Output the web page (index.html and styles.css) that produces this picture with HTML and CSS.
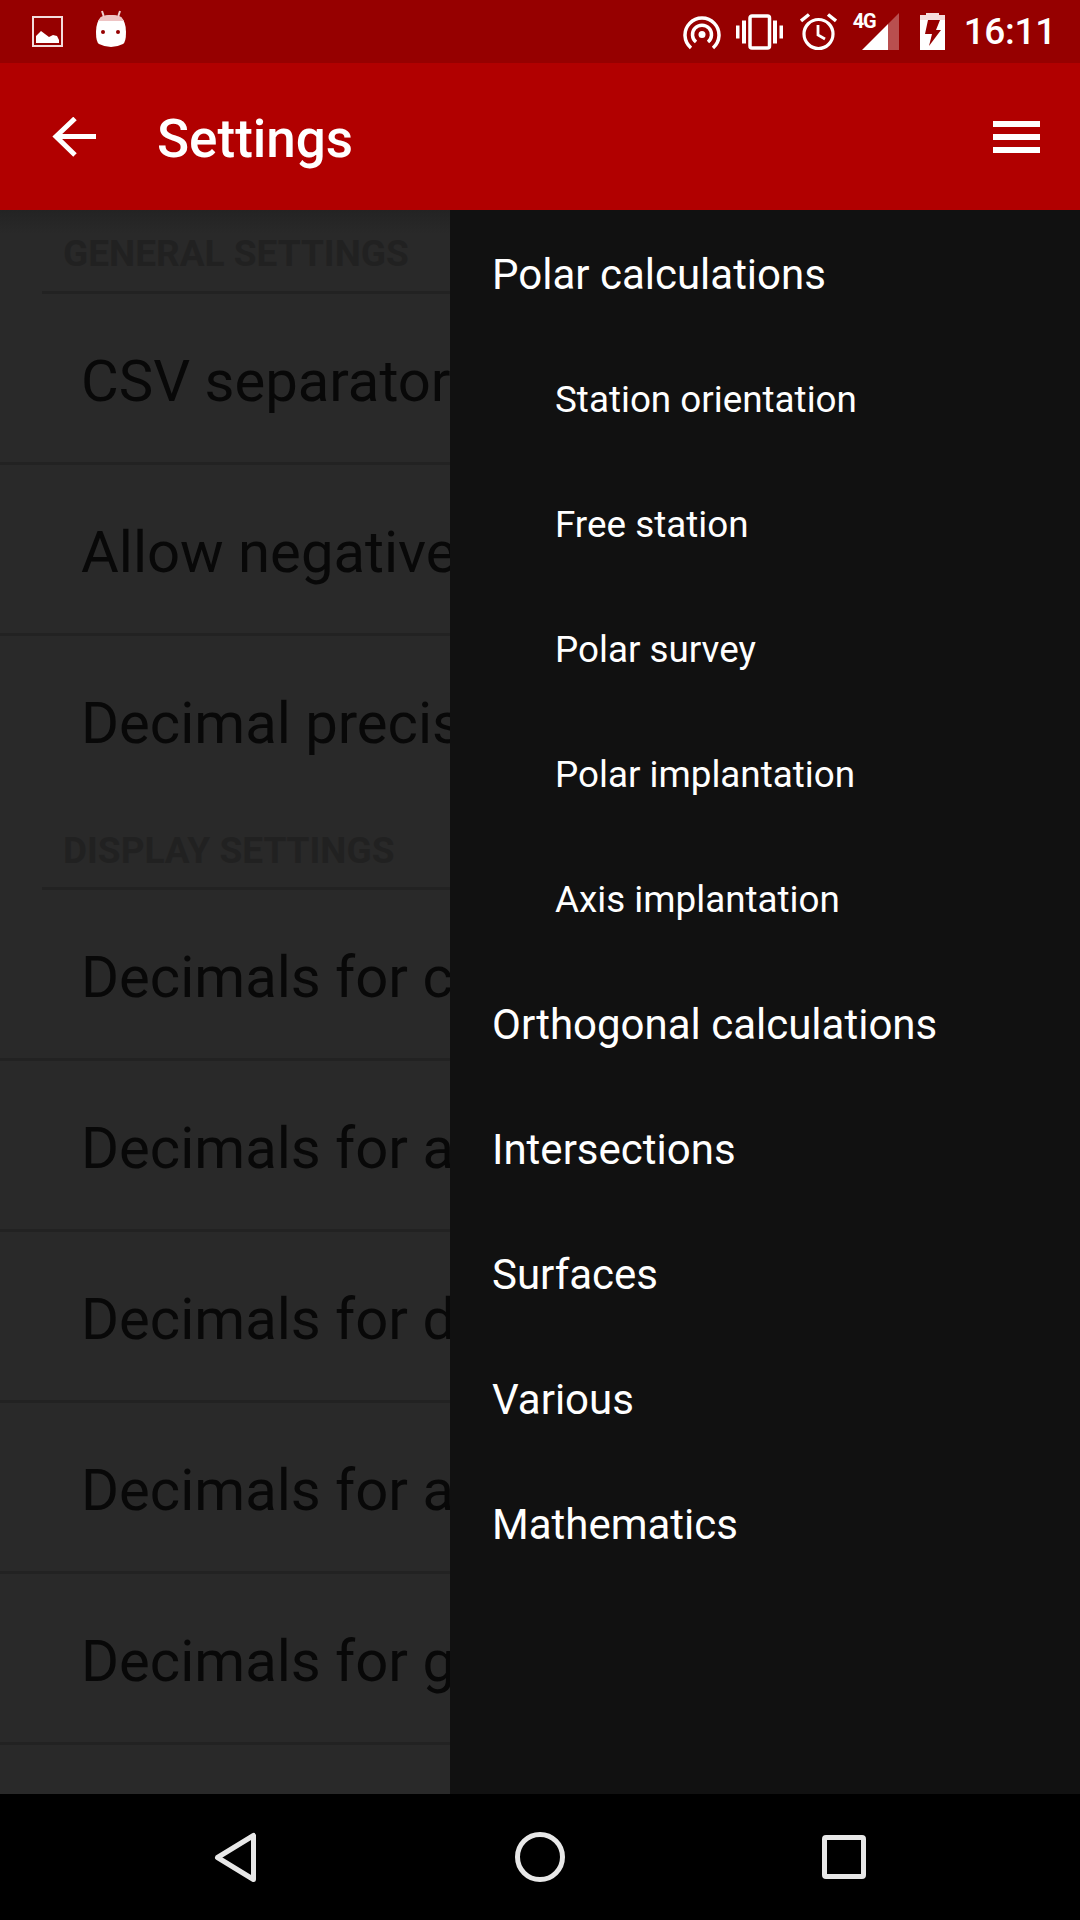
FILE: index.html
```html
<!DOCTYPE html>
<html lang="en">
<head>
<meta charset="UTF-8">
<meta name="viewport" content="width=device-width, initial-scale=1.0">
<title>Settings</title>
<link rel="stylesheet" href="styles.css">
</head>
<body>
<div class="phone">
  <div class="status-bar">
    <div class="status-left">
      <svg width="32" height="32" viewBox="0 0 32 32">
        <rect x="1" y="1" width="29" height="29" fill="none" stroke="#f3dcdc" stroke-width="2"/>
        <path d="M4 27V20L9 15L13 18L17 21L21 19L25 20L27 24V27Z" fill="#fff"/>
      </svg>
      <svg class="ic-android" width="32" height="38" viewBox="0 0 32 38">
        <path d="M7 1L9 7M25 1L23 7" stroke="#f0cfcf" stroke-width="2" fill="none"/>
        <path d="M6 7Q16 3 26 7Q31 12 31 22Q31 32 28 34Q22 37 16 37Q10 37 4 34Q1 32 1 22Q1 12 6 7Z" fill="#fff"/>
        <path d="M6 7Q16 3 26 7L29 11H3Z" fill="#eec4c4"/>
        <circle cx="8" cy="22" r="2" fill="#960000"/>
        <circle cx="23" cy="22" r="2" fill="#960000"/>
      </svg>
    </div>
    <div class="status-right">
      <svg width="38" height="36" viewBox="0 0 38 36">
        <path d="M8 34A17 17 0 1 1 30 34" fill="none" stroke="#fff" stroke-width="3.500"/>
        <path d="M13 28A9.500 9.500 0 1 1 25 28" fill="none" stroke="#fff" stroke-width="3.500"/>
        <circle cx="19" cy="20.500" r="3.500" fill="#fff"/>
      </svg>
      <svg class="ic-vibrate" width="47" height="36" viewBox="0 0 47 36">
        <rect x="14" y="2" width="19.500" height="32" rx="2" fill="none" stroke="#fff" stroke-width="3.500"/>
        <path d="M0 11.500h3.500v13H0zM6 6.500h4v23H6zM37 6.500h4v23h-4zM43.500 11.500H47v13h-3.500z" fill="#fff"/>
      </svg>
      <svg class="ic-alarm" width="37" height="38" viewBox="0 0 37 38">
        <circle cx="18.500" cy="21" r="14.500" fill="none" stroke="#fff" stroke-width="3.200"/>
        <path d="M18 12V22L25 26" fill="none" stroke="#fff" stroke-width="2.800"/>
        <path d="M1 8L9 1.500M36 8L28 1.500" fill="none" stroke="#fff" stroke-width="3.500"/>
      </svg>
      <div class="signal">
        <span class="signal-type">4G</span>
        <svg width="37" height="37" viewBox="0 0 37 37">
          <path d="M37 0V37H26V11Z" fill="#b94f4f"/>
          <path d="M26 11V37H0Z" fill="#fff"/>
        </svg>
      </div>
      <svg class="ic-battery" width="25" height="37" viewBox="0 0 25 37">
        <path d="M6 0H19V2H25V37H0V2H6Z" fill="#fff"/>
        <path d="M6 0H19V2H25V7H0V2H6Z" fill="#f4dcdc"/>
        <path d="M8 7H20L16 17H21L9 33L12 21H5Z" fill="#960000"/>
      </svg>
      <span class="clock">16:11</span>
    </div>
  </div>

  <div class="app-bar">
    <svg width="44" height="40" viewBox="0 0 44 40">
      <path d="M44 19.500H4M23 1.500L4 19.500L23 38" fill="none" stroke="#fff" stroke-width="5"/>
    </svg>
    <h1 class="title">Settings</h1>
    <svg width="47" height="32" viewBox="0 0 47 32">
      <path d="M0 0h47v6H0zM0 13h47v6H0zM0 26h47v6H0z" fill="#fff"/>
    </svg>
  </div>

  <div class="content">
    <div class="settings">
      <div class="section-title first">GENERAL SETTINGS</div>
      <div class="row">CSV separator</div>
      <div class="row">Allow negative coordinates</div>
      <div class="row last">Decimal precision</div>
      <div class="section-title">DISPLAY SETTINGS</div>
      <div class="row">Decimals for coordinates</div>
      <div class="row">Decimals for angles</div>
      <div class="row">Decimals for distances</div>
      <div class="row">Decimals for averages</div>
      <div class="row">Decimals for gisements</div>
    </div>

    <div class="drawer">
      <div class="drawer-item">Polar calculations</div>
      <div class="drawer-item sub">Station orientation</div>
      <div class="drawer-item sub">Free station</div>
      <div class="drawer-item sub">Polar survey</div>
      <div class="drawer-item sub">Polar implantation</div>
      <div class="drawer-item sub">Axis implantation</div>
      <div class="drawer-item">Orthogonal calculations</div>
      <div class="drawer-item">Intersections</div>
      <div class="drawer-item">Surfaces</div>
      <div class="drawer-item">Various</div>
      <div class="drawer-item">Mathematics</div>
    </div>
  </div>

  <div class="nav-bar">
    <svg width="44" height="52" viewBox="0 0 44 52">
      <path d="M39.500 4.500V48.500L3.500 26.500Z" fill="none" stroke="#e8e8e8" stroke-width="5" stroke-linejoin="round"/>
    </svg>
    <svg width="50" height="50" viewBox="0 0 50 50">
      <circle cx="25" cy="25" r="22.500" fill="none" stroke="#e8e8e8" stroke-width="5"/>
    </svg>
    <svg width="44" height="44" viewBox="0 0 44 44">
      <rect x="2.500" y="2.500" width="39" height="39" rx="1.500" fill="none" stroke="#e8e8e8" stroke-width="5"/>
    </svg>
  </div>
</div>
</body>
</html>
```

FILE: styles.css
```css
body {
  margin: 0;
  padding: 0;
  background-color: #000;
  font-family: Roboto, "Liberation Sans", sans-serif;
}
.phone {
  display: flex;
  flex-direction: column;
  width: 1080px;
  height: 1920px;
  overflow: hidden;
}

/* status bar */
.status-bar {
  display: flex;
  justify-content: space-between;
  align-items: center;
  flex: none;
  height: 63px;
  padding: 0 24px 0 32px;
  box-sizing: border-box;
  background-color: #960000;
}
.status-left {
  display: flex;
  align-items: center;
  gap: 31px;
}
.ic-android {
  margin-top: -6px;
}
.status-right {
  display: flex;
  align-items: center;
}
.ic-vibrate {
  margin-left: 15px;
}
.ic-alarm {
  margin-left: 17px;
}
.signal {
  position: relative;
  display: flex;
  margin-left: 25px;
}
.signal-type {
  position: absolute;
  left: -9px;
  top: -2px;
  color: #fff;
  font-size: 20px;
  font-weight: 700;
  letter-spacing: -1px;
  line-height: 20px;
}
.ic-battery {
  margin-left: 21px;
}
.clock {
  margin-left: 19px;
  color: #fff;
  font-size: 37px;
  font-weight: 500;
  letter-spacing: -0.3px;
}

/* app bar */
.app-bar {
  display: flex;
  align-items: center;
  flex: none;
  height: 147px;
  padding: 0 40px 0 52px;
  box-sizing: border-box;
  background-color: #b10000;
}
.title {
  flex: 1;
  margin: 4px 0 0 61px;
  color: #fff;
  font-size: 53px;
  font-weight: 500;
}

/* settings list behind the drawer */
.content {
  position: relative;
  flex: 1;
  overflow: hidden;
  background-color: #292929;
}
.content::before {
  content: "";
  position: absolute;
  top: 0;
  left: 0;
  right: 0;
  height: 24px;
  background: linear-gradient(#232323, #292929);
}
.settings {
  position: relative;
  white-space: nowrap;
}
.section-title {
  display: flex;
  align-items: flex-end;
  height: 86px;
  margin-left: 42px;
  padding-left: 21px;
  padding-bottom: 14px;
  box-sizing: border-box;
  border-bottom: 3px solid #222;
  color: #212121;
  font-size: 37px;
  line-height: 44px;
  font-weight: 700;
}
.section-title.first {
  height: 84px;
  padding-bottom: 15px;
}
.row {
  display: flex;
  align-items: center;
  height: 171px;
  padding-left: 81px;
  padding-top: 6px;
  box-sizing: border-box;
  border-bottom: 3px solid #222;
  color: #080808;
  font-size: 58px;
}
.row.last {
  height: 168px;
  border-bottom: none;
}

/* drawer */
.drawer {
  position: absolute;
  top: 0;
  right: 0;
  bottom: 0;
  width: 630px;
  padding-top: 2px;
  box-sizing: border-box;
  background-color: #111;
}
.drawer-item {
  display: flex;
  align-items: center;
  height: 125px;
  padding-left: 42px;
  color: #fff;
  font-size: 42px;
}
.drawer-item.sub {
  padding-left: 105px;
  font-size: 36.8px;
}

/* navigation bar */
.nav-bar {
  display: flex;
  justify-content: center;
  align-items: center;
  gap: 257px;
  flex: none;
  height: 126px;
  background-color: #000;
}
```
